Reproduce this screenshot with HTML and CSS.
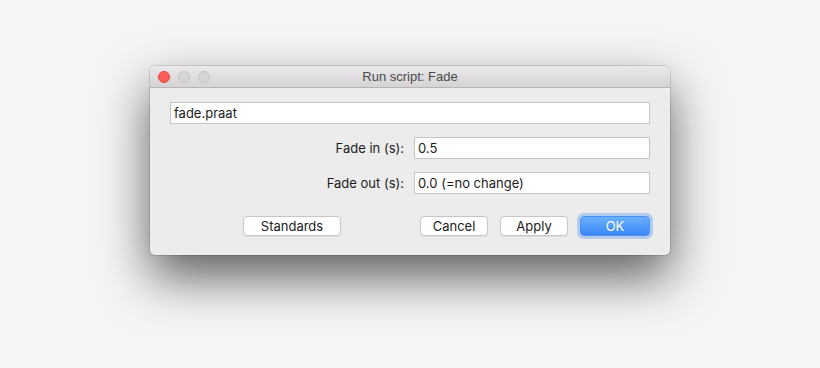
FILE: index.html
```html
<!DOCTYPE html>
<html lang="en">
<head>
  <meta charset="UTF-8" />
  <title>Run script: Fade</title>
  <link rel="stylesheet" href="styles.css">
</head>
<body>
  <div class="window">
    <div class="titlebar">
      <div class="lights">
        <span class="light close"></span>
        <span class="light"></span>
        <span class="light"></span>
      </div>
      <div class="title">Run script: Fade</div>
    </div>

    <div class="content">
      <input class="field file" type="text" value="fade.praat">

      <div class="form">
        <label for="fade-in">Fade in (s):</label>
        <input class="field" id="fade-in" type="text" value="0.5">

        <label for="fade-out">Fade out (s):</label>
        <input class="field" id="fade-out" type="text" value="0.0 (=no change)">
      </div>

      <div class="buttons">
        <button class="btn standards">Standards</button>
        <div class="right">
          <button class="btn">Cancel</button>
          <button class="btn">Apply</button>
          <button class="btn ok">OK</button>
        </div>
      </div>
    </div>
  </div>
</body>
</html>
```

FILE: styles.css
```css
body {
  margin: 0;
  padding-top: 66px;
  background: #f5f5f5;
  font-family: Inter, "Liberation Sans", Arial, sans-serif;
  font-size: 13px;
  color: #1c1c1c;
  height: 368px;
  box-sizing: border-box;
  overflow: hidden;
}

.window {
  width: 520px;
  margin-left: 150px;
  background: #ececec;
  border-radius: 5px;
  box-shadow: 0 0 0 1px rgba(0, 0, 0, 0.12), 0 22px 50px rgba(0, 0, 0, 0.62);
}

.titlebar {
  position: relative;
  height: 21px;
  background: linear-gradient(#eae8ea, #d5d3d5);
  border-bottom: 1px solid #b5b5b5;
  border-radius: 5px 5px 0 0;
  display: flex;
  align-items: center;
  justify-content: center;
}

.lights {
  position: absolute;
  left: 8px;
  top: 5px;
  display: flex;
  gap: 8px;
}

.light {
  box-sizing: border-box;
  width: 12px;
  height: 12px;
  border-radius: 50%;
  background: #d5d5d5;
  border: 1px solid #c3c3c3;
}

.light.close {
  background: #fc5f57;
  border-color: #e2463f;
}

.title {
  font-family: "Liberation Sans", Arial, sans-serif;
  color: #4a4a4a;
  font-size: 13px;
}

.content {
  padding: 14px 20px 19px 20px;
}

.field {
  display: block;
  box-sizing: border-box;
  height: 22px;
  margin: 0;
  padding: 0 3px;
  border: 1px solid #c4c4c4;
  background: #fff;
  font-family: inherit;
  font-size: 13px;
  color: #1c1c1c;
  outline: none;
}

.file {
  width: 100%;
}

.form {
  display: grid;
  grid-template-columns: 1fr 236px;
  column-gap: 10px;
  row-gap: 13px;
  margin-top: 13px;
  align-items: center;
}

.form label {
  text-align: right;
  color: #1c1c1c;
}

.buttons {
  display: flex;
  justify-content: space-between;
  align-items: center;
  margin-top: 22px;
}

.right {
  display: flex;
  gap: 12px;
}

.btn {
  height: 20px;
  width: 68px;
  padding: 0;
  border: 1px solid #c6c6c6;
  border-radius: 4px;
  background: #fff;
  font-family: inherit;
  font-size: 13px;
  color: #1c1c1c;
  box-shadow: 0 1px 0 rgba(0, 0, 0, 0.06);
}

.standards {
  width: 98px;
  margin-left: 73px;
}

.ok {
  width: 70px;
  color: #fff;
  border-color: #4a8ff5;
  background: linear-gradient(#6cb0fb, #3b87f7);
  box-shadow: 0 0 0 3px rgba(110, 165, 245, 0.45);
}
```
